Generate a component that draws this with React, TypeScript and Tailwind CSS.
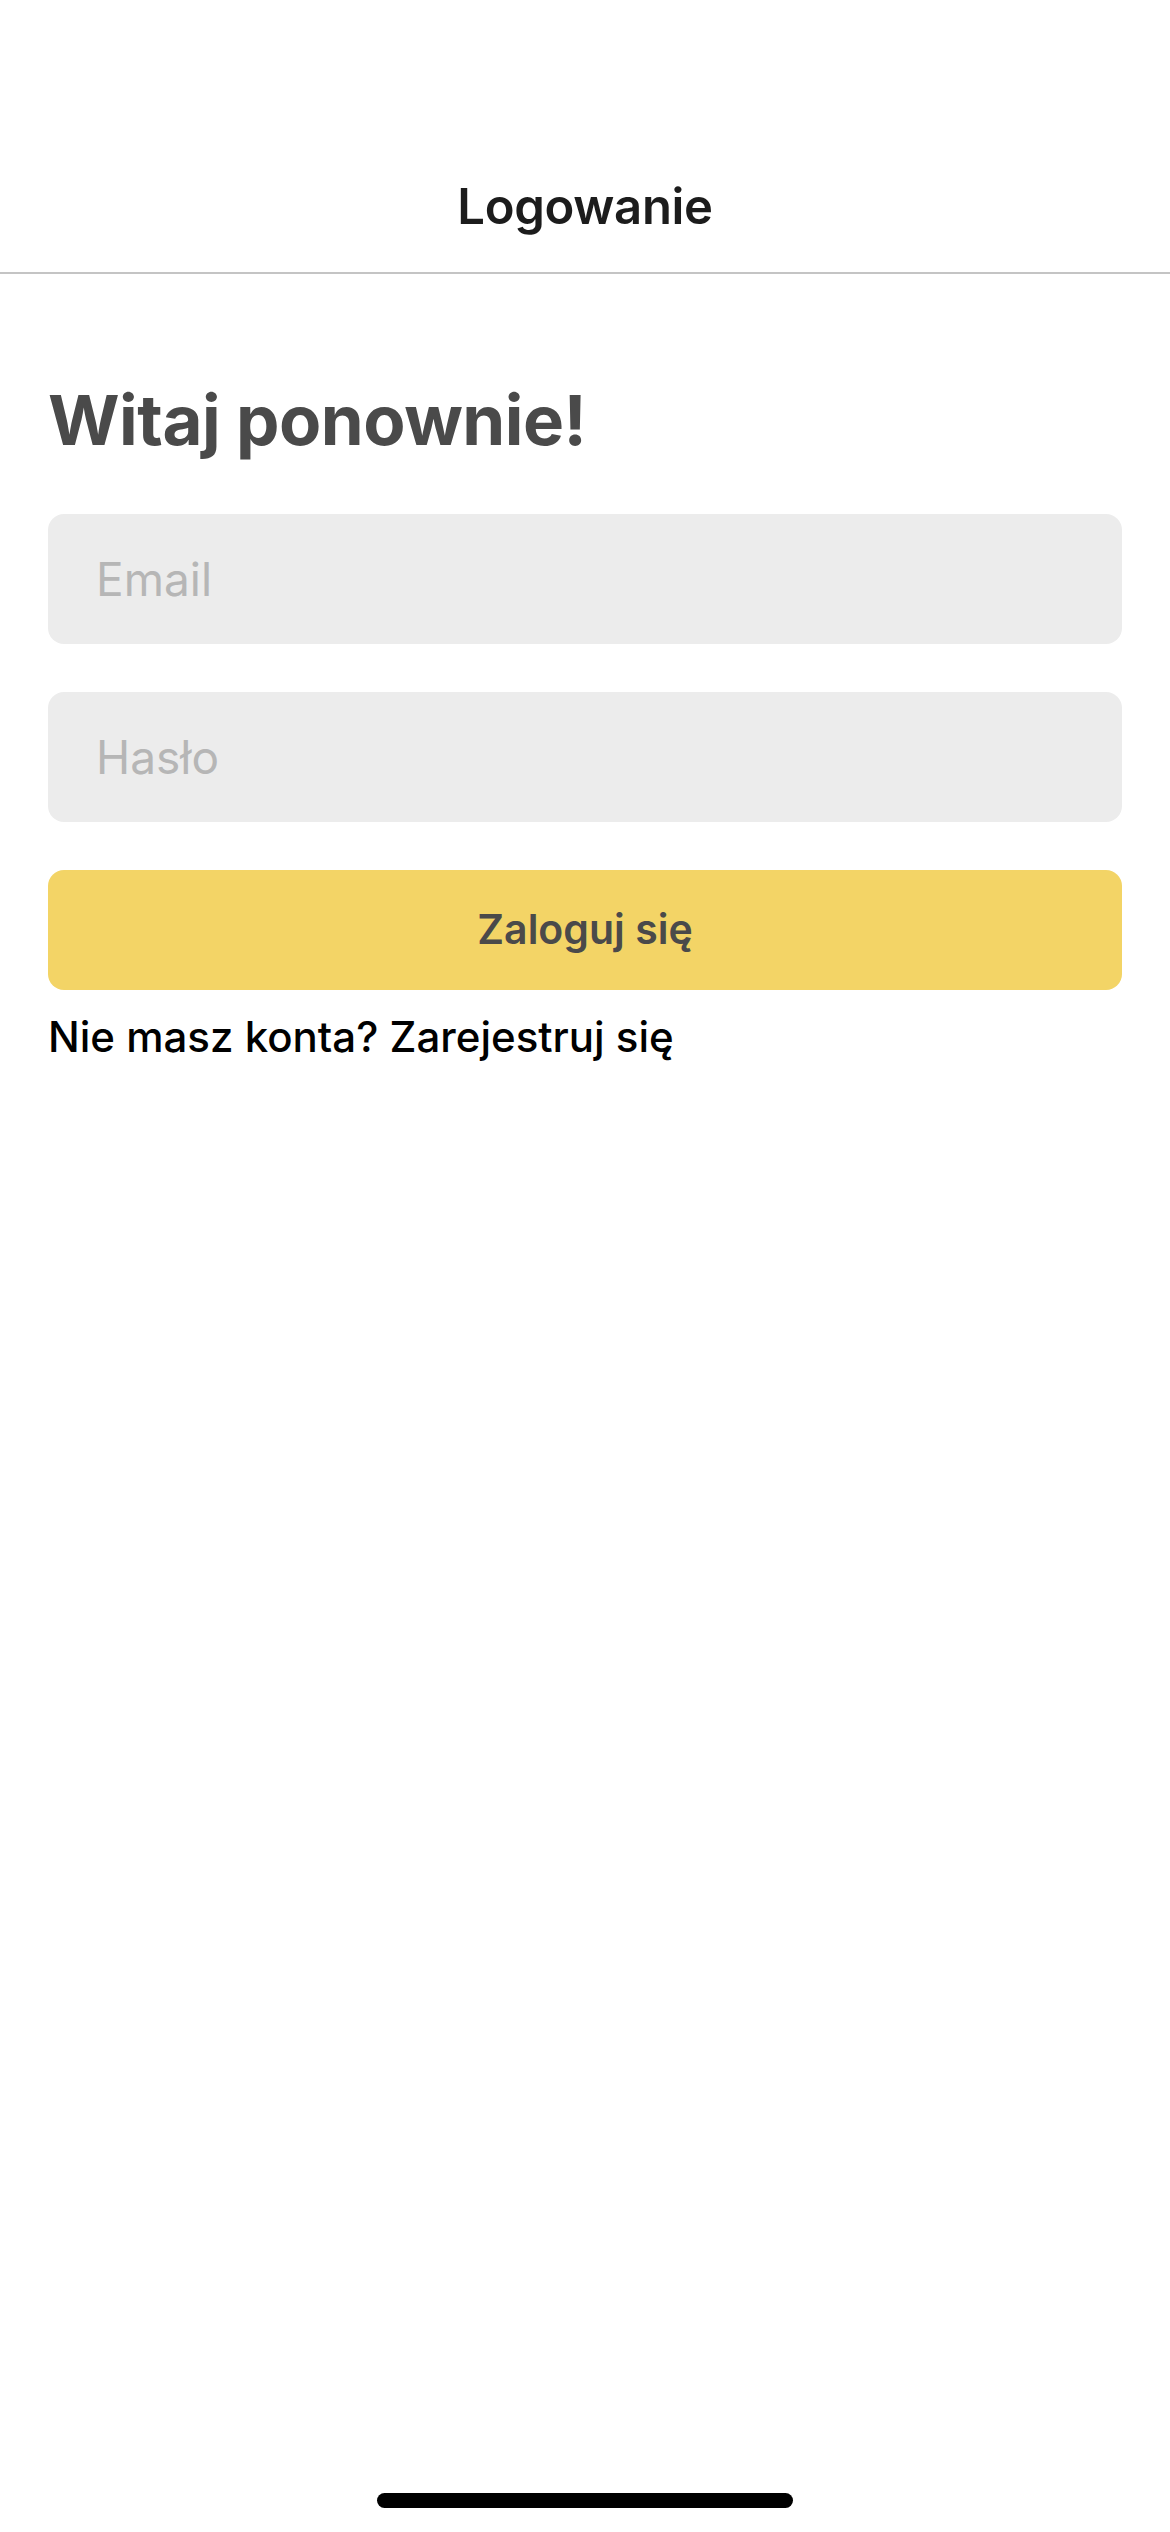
import React from "react";

export default function App() {
  return (
    <div
      className="w-[1170px] h-[2532px] bg-white flex flex-col"
      style={{ fontFamily: "Inter, 'Noto Sans', sans-serif" }}
    >
      <div className="h-[141px] shrink-0" />
      <header className="h-[133px] shrink-0 flex items-center justify-center border-b-2 border-[#c4c4c4]">
        <h1 className="text-[49px] font-semibold text-[#1c1c1c] leading-none tracking-[-0.3px]">Logowanie</h1>
      </header>
      <main className="flex flex-col px-[48px]">
        <h2 className="mt-[112px] text-[69px] font-bold text-[#4a4a4a] leading-none tracking-[-0.5px]">
          Witaj ponownie!
        </h2>
        <input
          type="email"
          placeholder="Email"
          className="mt-[59px] h-[130px] w-full rounded-[16px] bg-[#ececec] pl-[48px] text-[46px] text-[#333] placeholder:text-[#b6b6b6] outline-none"
        />
        <input
          type="password"
          placeholder="Hasło"
          className="mt-[48px] h-[130px] w-full rounded-[16px] bg-[#ececec] pl-[48px] text-[46px] text-[#333] placeholder:text-[#b6b6b6] outline-none"
        />
        <button className="mt-[48px] h-[120px] w-full rounded-[16px] bg-[#f3d466] text-[41px] font-semibold text-[#4a4a4a]">
          Zaloguj się
        </button>
        <p className="mt-[26px] text-[42px] font-medium text-black leading-none">
          Nie masz konta? Zarejestruj się
        </p>
      </main>
      <div className="mt-auto mb-[24px] flex justify-center">
        <div className="h-[15px] w-[416px] rounded-full bg-black" />
      </div>
    </div>
  );
}
